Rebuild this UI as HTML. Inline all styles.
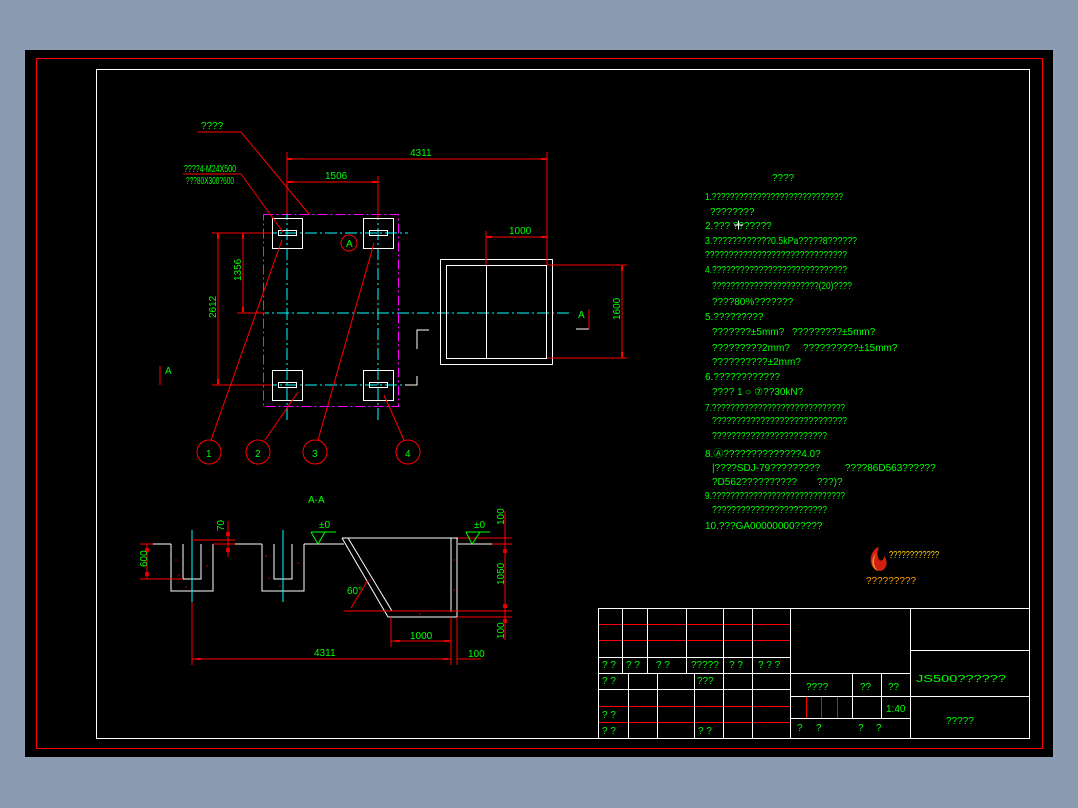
<!DOCTYPE html>
<html><head><meta charset="utf-8"><style>
html,body{margin:0;padding:0;background:#8a9bb2;width:1078px;height:808px;overflow:hidden}
svg{display:block}
text{font-family:"Liberation Sans Narrow","Liberation Sans",sans-serif;fill:#00ff00;font-size:10px}
</style></head><body>
<svg width="1078" height="808" viewBox="0 0 1078 808">
<rect x="0" y="0" width="1078" height="808" fill="#8a9bb2"/>
<rect x="25" y="50" width="1028" height="707" fill="#000"/>
<rect x="36.5" y="58.5" width="1006" height="690" fill="none" stroke="#f00" stroke-width="1"/>
<rect x="96.5" y="69.5" width="933" height="669" fill="none" stroke="#fff" stroke-width="1"/>

<!-- plan view -->
<g fill="none" stroke-width="1">
<rect x="263.5" y="214.5" width="135" height="192" stroke="#f0f" stroke-dasharray="10,3,2,3"/>
<g stroke="#0ff" stroke-dasharray="12,3,2,3">
<line x1="287" y1="208" x2="287" y2="423"/><line x1="378" y1="208" x2="378" y2="423"/>
<line x1="265" y1="233" x2="408" y2="233"/><line x1="237" y1="313" x2="572" y2="313"/>
<line x1="265" y1="385" x2="408" y2="385"/>
</g>
<g stroke="#fff">
<rect x="272.5" y="218.5" width="30" height="30"/><rect x="363.5" y="218.5" width="30" height="30"/>
<rect x="272.5" y="370.5" width="30" height="30"/><rect x="363.5" y="370.5" width="30" height="30"/>
<rect x="278.5" y="230.5" width="18" height="5"/><rect x="369.5" y="230.5" width="18" height="5"/>
<rect x="278.5" y="382.5" width="18" height="5"/><rect x="369.5" y="382.5" width="18" height="5"/>
<rect x="440.5" y="259.5" width="112" height="105"/><rect x="446.5" y="265.5" width="100" height="93"/>
<line x1="486.5" y1="265" x2="486.5" y2="358"/>
<polyline points="417,349 417,330 429,330"/><polyline points="417,376 417,385 405,385"/>
<polyline points="576,329 589,329"/>
</g>
<g stroke="#f00">
<line x1="287" y1="152" x2="287" y2="214"/><line x1="547" y1="152" x2="547" y2="265"/>
<line x1="287" y1="159" x2="547" y2="159"/>
<line x1="378" y1="176" x2="378" y2="218"/><line x1="287" y1="182" x2="378" y2="182"/>
<line x1="486" y1="231" x2="486" y2="265"/><line x1="486" y1="237" x2="547" y2="237"/>
<line x1="547" y1="265" x2="627" y2="265"/><line x1="547" y1="358" x2="627" y2="358"/>
<line x1="622" y1="265" x2="622" y2="358"/>
<line x1="212" y1="233" x2="272" y2="233"/><line x1="212" y1="385" x2="272" y2="385"/>
<line x1="237" y1="313" x2="265" y2="313"/>
<line x1="218" y1="233" x2="218" y2="385"/><line x1="243" y1="233" x2="243" y2="313"/>
<line x1="197" y1="132" x2="241" y2="132"/><line x1="241" y1="132" x2="309" y2="214"/>
<line x1="183" y1="174" x2="241" y2="174"/><line x1="241" y1="174" x2="283" y2="232"/>
<line x1="211" y1="440" x2="282" y2="240"/><line x1="265" y1="440" x2="298" y2="392"/>
<line x1="318" y1="440" x2="374" y2="243"/><line x1="404" y1="440" x2="384" y2="395"/>
<circle cx="209" cy="452" r="12"/><circle cx="258" cy="452" r="12"/>
<circle cx="315" cy="452" r="12"/><circle cx="408" cy="452" r="12"/>
<circle cx="349" cy="243" r="8"/>
<line x1="160" y1="366" x2="160" y2="385"/><line x1="589" y1="309" x2="589" y2="329"/>
</g>
</g>
<g fill="#f00">
<rect x="287" y="158" width="5" height="2"/><rect x="541" y="158" width="5" height="2"/>
<rect x="288" y="181" width="5" height="2"/><rect x="372" y="181" width="5" height="2"/>
<rect x="487" y="236" width="5" height="2"/><rect x="541" y="236" width="5" height="2"/>
<rect x="621" y="266" width="2" height="5"/><rect x="621" y="352" width="2" height="5"/>
<rect x="217" y="234" width="2" height="5"/><rect x="217" y="379" width="2" height="5"/>
<rect x="242" y="234" width="2" height="5"/><rect x="242" y="307" width="2" height="5"/>
</g>
<text x="201" y="129" font-size="8">????</text>
<text x="184" y="172" font-size="8" textLength="52" lengthAdjust="spacingAndGlyphs">????4-M24X500</text>
<text x="186" y="184" font-size="8" textLength="48" lengthAdjust="spacingAndGlyphs">???80X300?600</text>
<text x="410" y="156" font-size="9">4311</text>
<text x="325" y="179" font-size="9">1506</text>
<text x="509" y="234" font-size="9">1000</text>
<text x="346" y="247" font-size="9">A</text>
<text font-size="9" transform="translate(216,318) rotate(-90)">2612</text>
<text font-size="9" transform="translate(241,281) rotate(-90)">1356</text>
<text font-size="9" transform="translate(620,320) rotate(-90)">1600</text>
<text x="165" y="374" font-size="11">A</text>
<text x="578" y="318" font-size="11">A</text>
<text x="206" y="457" font-size="12">1</text><text x="255" y="457" font-size="12">2</text>
<text x="312" y="457" font-size="12">3</text><text x="405" y="457" font-size="12">4</text>

<!-- section A-A -->
<text x="308" y="503" font-size="11">A-A</text>
<g fill="none" stroke-width="1">
<g stroke="#fff">
<polyline points="153,544 171,544"/><polyline points="213,544 262,544"/><polyline points="304,544 344,544"/>
<polyline points="171,544 171,591 213,591 213,544"/><polyline points="183,544 183,579 201,579 201,544"/>
<polyline points="262,544 262,591 304,591 304,544"/><polyline points="274,544 274,579 292,579 292,544"/>
<polyline points="342,538 458,538"/><line x1="451" y1="538" x2="451" y2="612"/><line x1="457" y1="538" x2="457" y2="617"/>
<line x1="342" y1="538" x2="388" y2="617"/><line x1="348" y1="538" x2="392" y2="611"/>
<line x1="392" y1="611" x2="451" y2="611"/><line x1="388" y1="617" x2="457" y2="617"/>
<line x1="458" y1="544" x2="492" y2="544"/>
</g>
<g stroke="#0ff"><line x1="192" y1="530" x2="192" y2="602"/><line x1="283" y1="530" x2="283" y2="602"/></g>
<g stroke="#f00">
<line x1="140" y1="544" x2="153" y2="544"/><line x1="140" y1="579" x2="183" y2="579"/><line x1="147" y1="544" x2="147" y2="579"/>
<line x1="192" y1="602" x2="192" y2="665"/><line x1="192" y1="659" x2="451" y2="659"/>
<line x1="391" y1="617" x2="391" y2="647"/><line x1="391" y1="641" x2="451" y2="641"/>
<line x1="451" y1="617" x2="451" y2="665"/><line x1="457" y1="617" x2="457" y2="665"/><line x1="457" y1="659" x2="481" y2="659"/>
<line x1="505" y1="511" x2="505" y2="640"/><line x1="458" y1="538" x2="512" y2="538"/><line x1="492" y1="544" x2="512" y2="544"/>
<line x1="344" y1="611" x2="512" y2="611"/><line x1="458" y1="617" x2="512" y2="617"/>
<line x1="192" y1="540" x2="235" y2="540"/><line x1="228" y1="521" x2="228" y2="557"/>
<line x1="213" y1="544" x2="235" y2="544"/>
<line x1="351" y1="608" x2="368" y2="580"/>
</g>
<g stroke="#0f0"><polyline points="311,532 336,532"/><polyline points="311,532 318,544 325,532"/>
<polyline points="466,532 490,532"/><polyline points="466,532 472,544 480,532"/></g>
</g>
<g fill="#f00" opacity=".8">
<circle cx="176" cy="560" r=".8"/><circle cx="179" cy="575" r=".8"/><circle cx="207" cy="566" r=".8"/><circle cx="186" cy="587" r=".8"/>
<circle cx="266" cy="556" r=".8"/><circle cx="298" cy="563" r=".8"/><circle cx="280" cy="586" r=".8"/><circle cx="269" cy="578" r=".8"/>
<circle cx="454" cy="560" r=".8"/><circle cx="454" cy="590" r=".8"/><circle cx="420" cy="614" r=".8"/><circle cx="370" cy="580" r=".8"/>
<rect x="503" y="549" width="4" height="4"/><rect x="503" y="604" width="4" height="4"/><rect x="503" y="619" width="4" height="4"/>
<rect x="226" y="532" width="4" height="4"/><rect x="226" y="548" width="4" height="4"/>
<rect x="145" y="548" width="4" height="4"/><rect x="145" y="572" width="4" height="4"/>
<rect x="196" y="658" width="5" height="2"/><rect x="443" y="658" width="5" height="2"/>
<rect x="395" y="640" width="5" height="2"/><rect x="444" y="640" width="5" height="2"/>
</g>
<text font-size="8" transform="translate(147,567) rotate(-90)">600</text>
<text font-size="8" transform="translate(224,531) rotate(-90)">70</text>
<text x="319" y="528" font-size="8">±0</text><text x="474" y="528" font-size="8">±0</text>
<text font-size="8" transform="translate(504,525) rotate(-90)">100</text>
<text font-size="8" transform="translate(504,585) rotate(-90)">1050</text>
<text font-size="8" transform="translate(504,639) rotate(-90)">100</text>
<text x="347" y="594" font-size="8">60°</text>
<text x="410" y="639" font-size="8">1000</text>
<text x="314" y="656" font-size="8">4311</text>
<text x="468" y="657" font-size="8">100</text>

<!-- notes -->
<g font-size="10">
<text x="772" y="181">????</text>
<text x="705" y="200" textLength="138" lengthAdjust="spacingAndGlyphs">1.?????????????????????????????</text>
<text x="710" y="215">????????</text>
<text x="705" y="229">2.???   ???????</text>
<text x="705" y="244" textLength="152" lengthAdjust="spacingAndGlyphs">3.????????????0.5kPa?????8??????</text>
<text x="705" y="258" textLength="142" lengthAdjust="spacingAndGlyphs">??????????????????????????????</text>
<text x="705" y="273" textLength="142" lengthAdjust="spacingAndGlyphs">4.?????????????????????????????</text>
<text x="712" y="289" textLength="140" lengthAdjust="spacingAndGlyphs">???????????????????????(20)????</text>
<text x="712" y="305">????80%???????</text>
<text x="705" y="320">5.?????????</text>
<text x="712" y="335">???????±5mm?</text><text x="792" y="335">?????????±5mm?</text>
<text x="712" y="351">?????????2mm?</text><text x="803" y="351">??????????±15mm?</text>
<text x="712" y="365">??????????±2mm?</text>
<text x="705" y="380">6.????????????</text>
<text x="712" y="395">???? 1  ○  ⑦??30kN?</text>
<text x="705" y="411" textLength="140" lengthAdjust="spacingAndGlyphs">7.?????????????????????????????</text>
<text x="712" y="424" textLength="135" lengthAdjust="spacingAndGlyphs">????????????????????????????</text>
<text x="712" y="439" textLength="115" lengthAdjust="spacingAndGlyphs">????????????????????????</text>
<text x="705" y="457">8.Ⓐ??????????????4.0?</text>
<text x="712" y="471">|????SDJ-79?????????</text><text x="845" y="471">????86D563??????</text>
<text x="712" y="485">?D562??????????</text><text x="817" y="485">???)?</text>
<text x="705" y="499" textLength="140" lengthAdjust="spacingAndGlyphs">9.?????????????????????????????</text>
<text x="712" y="513" textLength="115" lengthAdjust="spacingAndGlyphs">????????????????????????</text>
<text x="705" y="529">10.???GA00000000?????</text>
</g>
<!-- logo -->
<path d="M878,547 C868,552 868,570 880,571 C888,570 888,560 884,556 C884,562 878,562 878,556 C876,552 880,549 878,547 Z" fill="#d02010"/>
<path d="M876,553 C870,560 872,569 878,571 C873,566 873,560 876,553 Z" fill="#ff9020"/>
<text x="889" y="558" font-size="8" style="fill:#ffd000" textLength="50" lengthAdjust="spacingAndGlyphs">????????????</text>
<text x="866" y="584" font-size="12" style="fill:#ff9a00">?????????</text>

<!-- title block -->
<g fill="none" stroke-width="1">
<g stroke="#f00">
<line x1="598" y1="624.5" x2="790" y2="624.5"/><line x1="598" y1="640.5" x2="790" y2="640.5"/>
<line x1="598" y1="706.5" x2="790" y2="706.5"/><line x1="598" y1="722.5" x2="790" y2="722.5"/>
<line x1="806.5" y1="696" x2="806.5" y2="718"/><line x1="821.5" y1="696" x2="821.5" y2="718"/><line x1="837.5" y1="696" x2="837.5" y2="718"/>
</g>
<g stroke="#fff">
<rect x="598.5" y="608.5" width="431" height="130"/>
<line x1="598" y1="657.5" x2="790" y2="657.5"/><line x1="598" y1="673.5" x2="790" y2="673.5"/><line x1="598" y1="689.5" x2="790" y2="689.5"/>
<line x1="622.5" y1="608" x2="622.5" y2="673"/><line x1="647.5" y1="608" x2="647.5" y2="673"/>
<line x1="686.5" y1="608" x2="686.5" y2="673"/><line x1="723.5" y1="608" x2="723.5" y2="738"/>
<line x1="752.5" y1="608" x2="752.5" y2="738"/><line x1="790.5" y1="608" x2="790.5" y2="738"/>
<line x1="628.5" y1="673" x2="628.5" y2="738"/><line x1="657.5" y1="673" x2="657.5" y2="738"/>
<line x1="694.5" y1="673" x2="694.5" y2="738"/>
<line x1="910.5" y1="608" x2="910.5" y2="738"/>
<line x1="790" y1="673.5" x2="910" y2="673.5"/><line x1="790" y1="696.5" x2="910" y2="696.5"/><line x1="790" y1="718.5" x2="910" y2="718.5"/>
<line x1="852.5" y1="673" x2="852.5" y2="718"/><line x1="881.5" y1="673" x2="881.5" y2="718"/>
<line x1="910" y1="650.5" x2="1030" y2="650.5"/><line x1="910" y1="696.5" x2="1030" y2="696.5"/>
</g>
</g>
<g font-size="9">
<text x="602" y="668">? ?</text><text x="626" y="668">? ?</text><text x="656" y="668">? ?</text>
<text x="691" y="668">?????</text><text x="729" y="668">? ?</text><text x="758" y="668">? ? ?</text>
<text x="602" y="684">? ?</text><text x="697" y="684">???</text>
<text x="602" y="718">? ?</text><text x="602" y="734">? ?</text><text x="698" y="734">? ?</text>
<text x="806" y="690" font-size="12">????</text><text x="860" y="690" font-size="12">??</text><text x="888" y="690" font-size="12">??</text>
<text x="886" y="712" font-size="12">1:40</text>
<text x="797" y="731">?</text><text x="816" y="731">?</text><text x="858" y="731">?</text><text x="876" y="731">?</text>
<text x="916" y="682" font-size="19" textLength="90" lengthAdjust="spacingAndGlyphs">JS500??????</text>
<text x="946" y="724" font-size="15">?????</text>
</g>
<path d="M734,225 h9 M738.5,220.5 v9" stroke="#fff"/>
</svg>
</body></html>
